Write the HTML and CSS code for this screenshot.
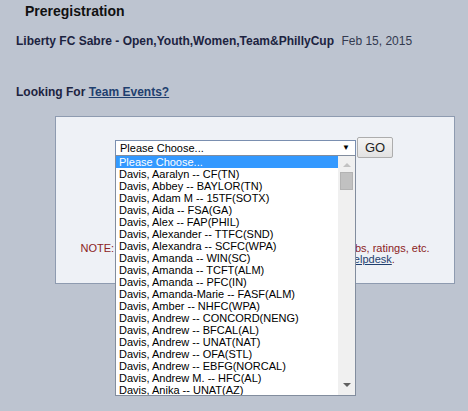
FILE: index.html
```html
<!DOCTYPE html>
<html lang="en">
  <head>
    <meta charset="UTF-8" />
    <meta name="viewport" content="width=device-width, initial-scale=1.0" />
    <title>Preregistration</title>
    <link rel="stylesheet" href="styles.css">
  </head>
  <body>
    <h1 class="page-title">Preregistration</h1>
    <div class="event-line">
      <span class="event-name">Liberty FC Sabre - Open,Youth,Women,Team&amp;PhillyCup</span>
      <span class="event-date">Feb 15, 2015</span>
    </div>
    <div class="looking-for">Looking For <a href="#">Team Events?</a></div>

    <div class="choose-panel">
      <form class="choose-form">
        <div class="select-box">
          <span>Please Choose...</span>
          <span class="select-arrow">&#9660;</span>
        </div>
        <button type="button" class="go-btn">GO</button>
      </form>
      <p class="note">
        NOTE: If your name is not listed, check membership, clubs, ratings, etc.<br />
        If you still can't find yourself, please contact the <a href="#">helpdesk</a>.
      </p>
    </div>

    <!-- open dropdown of the select above -->
    <div class="dropdown-list">
      <ul id="fencer-list"></ul>
      <div class="scrollbar">
        <span class="scroll-up"></span>
        <span class="scroll-thumb"></span>
        <span class="scroll-down"></span>
      </div>
    </div>

    <script>
      const fencers = [
        "Please Choose...",
        "Davis, Aaralyn -- CF(TN)",
        "Davis, Abbey -- BAYLOR(TN)",
        "Davis, Adam M -- 15TF(SOTX)",
        "Davis, Aida -- FSA(GA)",
        "Davis, Alex -- FAP(PHIL)",
        "Davis, Alexander -- TTFC(SND)",
        "Davis, Alexandra -- SCFC(WPA)",
        "Davis, Amanda -- WIN(SC)",
        "Davis, Amanda -- TCFT(ALM)",
        "Davis, Amanda -- PFC(IN)",
        "Davis, Amanda-Marie -- FASF(ALM)",
        "Davis, Amber -- NHFC(WPA)",
        "Davis, Andrew -- CONCORD(NENG)",
        "Davis, Andrew -- BFCAL(AL)",
        "Davis, Andrew -- UNAT(NAT)",
        "Davis, Andrew -- OFA(STL)",
        "Davis, Andrew -- EBFG(NORCAL)",
        "Davis, Andrew M. -- HFC(AL)",
        "Davis, Anika -- UNAT(AZ)",
      ];

      let text = "";
      for (let i = 0; i < fencers.length; i++) {
        text += `<li class="${i == 0 ? "selected" : ""}">${fencers[i]}</li>`;
      }
      document.getElementById("fencer-list").innerHTML = text;
    </script>
  </body>
</html>
```

FILE: styles.css
```css
html,
body {
  min-height: 100vh;
}

body {
  position: relative;
  margin: 0;
  background-color: #bdc4d0;
  font-family: "Liberation Sans", Arial, sans-serif;
  color: #1c2340;
}

.page-title {
  margin: 3px 0 0 0;
  padding-left: 25px;
  font-size: 14px;
  line-height: 16px;
  color: #111;
}

.event-line {
  margin: 15px 0 0 16px;
  font-size: 12px;
  line-height: 14px;
}

.event-name {
  font-weight: bold;
  margin-right: 4px;
}

.event-date {
  color: #333a4f;
}

.looking-for {
  margin: 37px 0 0 16px;
  font-size: 12px;
  line-height: 14px;
  font-weight: bold;
}

.looking-for a {
  color: #1f3f6f;
}

.choose-panel {
  width: 398px;
  height: 166px;
  margin: 17px 0 0 55px;
  border: 1px solid #8e9bb0;
  background-color: #eef1f6;
}

.choose-form {
  display: flex;
  justify-content: center;
  align-items: center;
  gap: 1px;
  padding: 20px 2px 0 0;
  margin: 0;
}

.select-box {
  display: flex;
  justify-content: space-between;
  align-items: center;
  width: 231px;
  height: 14px;
  padding: 0 4px;
  border: 1px solid #7a8fb0;
  background-color: #fff;
  font-size: 11px;
  color: #000;
}

.select-arrow {
  font-size: 8px;
  margin-right: 1px;
}

.go-btn {
  width: 36px;
  height: 21px;
  padding: 0;
  border: 1px solid #adadad;
  border-radius: 2px;
  background: linear-gradient(#f4f4f4, #e2e2e2);
  font-family: "Liberation Sans", Arial, sans-serif;
  font-size: 13px;
  color: #222;
  cursor: pointer;
}

.note {
  margin: 85px 0 0 0;
  text-align: center;
  font-size: 11px;
  line-height: 11px;
  color: #8b2323;
}

.note a {
  color: #1f3f6f;
}

.dropdown-list {
  position: absolute;
  top: 155px;
  left: 115px;
  display: flex;
  width: 239px;
  height: 239px;
  border: 1px solid #828d9e;
  background-color: #fff;
  overflow: hidden;
  z-index: 2;
}

.dropdown-list ul {
  flex: 1;
  margin: 0;
  padding: 0;
  list-style: none;
}

.dropdown-list li {
  height: 12px;
  padding-left: 3px;
  font-size: 11px;
  line-height: 12px;
  color: #000;
  white-space: nowrap;
}

.dropdown-list li.selected {
  background-color: #3399ff;
  color: #fff;
}

.scrollbar {
  position: relative;
  width: 17px;
  background-color: #f0f0f0;
}

.scroll-up,
.scroll-down {
  position: absolute;
  left: 5px;
  width: 0;
  height: 0;
  border-left: 4px solid transparent;
  border-right: 4px solid transparent;
}

.scroll-up {
  top: 7px;
  border-bottom: 4px solid #c2c2c2;
}

.scroll-down {
  bottom: 8px;
  border-top: 4px solid #606060;
}

.scroll-thumb {
  position: absolute;
  top: 16px;
  left: 2px;
  width: 11px;
  height: 16px;
  border: 1px solid #b3b3b3;
  background-color: #c1c1c1;
}
```
